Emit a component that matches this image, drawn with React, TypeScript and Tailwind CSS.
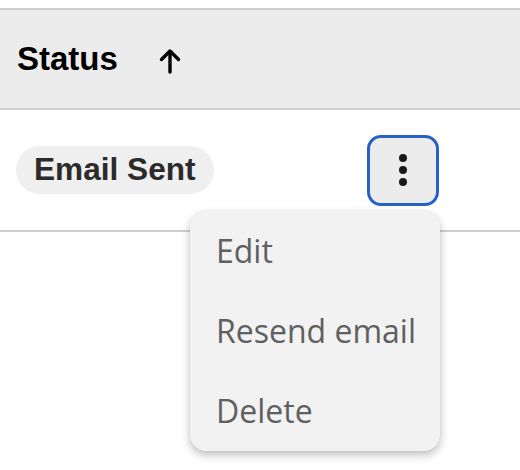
import React from 'react';

const ArrowUpIcon = () => (
  <svg width="22" height="26" viewBox="0 0 22 26" fill="none" stroke="#000" strokeWidth="3.4" strokeLinecap="round" strokeLinejoin="round">
    <path d="M11 4 V24" />
    <path d="M2.5 11.5 L11 3 L19.5 11.5" />
  </svg>
);

const App: React.FC = () => {
  const menuItems = ['Edit', 'Resend email', 'Delete'];

  return (
    <div className="w-[520px] h-[470px] bg-white pt-2 overflow-hidden">
      {/* Header */}
      <div className="h-[102px] flex items-center bg-[#ececec] border-y-2 border-[#cfcfcf] pl-[17px]">
        <span className="text-[33px] font-bold text-black font-['Liberation_Sans',Arial,sans-serif]">Status</span>
        <span className="ml-[41px] mt-[3px] flex items-center">
          <ArrowUpIcon />
        </span>
      </div>

      {/* Row */}
      <div className="h-[122px] flex items-center border-b-2 border-[#cfcfcf]">
        <div className="w-[367px] pl-4 flex items-center">
          <span className="h-[48px] px-[18px] flex items-center rounded-full bg-[#efefef] text-[31.6px] font-bold text-[#2b2b2b] whitespace-nowrap font-['Liberation_Sans',Arial,sans-serif]">
            Email Sent
          </span>
        </div>
        <div className="relative">
          <button className="w-[72px] h-[71px] flex flex-col items-center justify-center gap-[4px] bg-[#ececec] border-[3px] border-[#2462c6] rounded-[14px]">
            <span className="w-2 h-2 rounded-full bg-[#1a1a1a]" />
            <span className="w-2 h-2 rounded-full bg-[#1a1a1a]" />
            <span className="w-2 h-2 rounded-full bg-[#1a1a1a]" />
          </button>

          {/* Dropdown menu */}
          <div className="absolute top-full mt-[5px] right-[-1px] w-[250px] bg-[#f2f2f2] rounded-[16px] shadow-[0_4px_10px_rgba(0,0,0,0.25),0_0_3px_rgba(0,0,0,0.06)] z-10">
            {menuItems.map(item => (
              <div
                key={item}
                className="h-[80px] flex items-center px-[26px] text-[32px] text-[#606060] whitespace-nowrap font-['Open_Sans',sans-serif]"
              >
                {item}
              </div>
            ))}
          </div>
        </div>
      </div>
    </div>
  );
};

export default App;
